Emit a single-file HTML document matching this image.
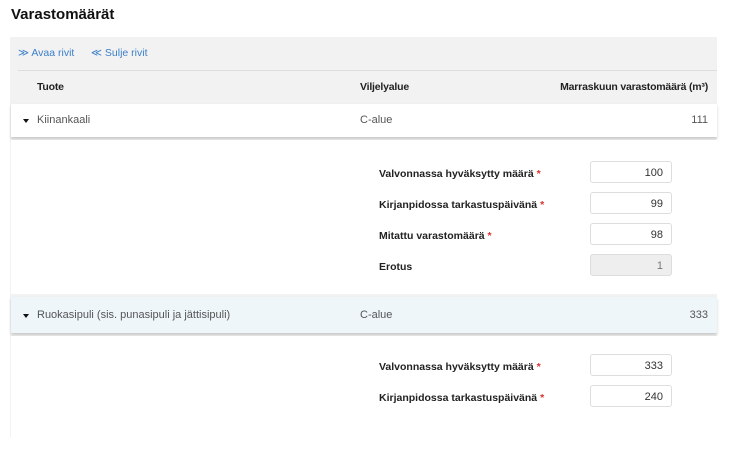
<!DOCTYPE html>
<html><head><meta charset="utf-8"><style>
body{margin:0;width:738px;height:417px;overflow:hidden;background:#fff;font-family:"Liberation Sans",sans-serif;font-size:11px;color:#333}
.t{position:absolute;left:11px;top:6px;font-size:15px;font-weight:bold;color:#111}
.p{position:absolute;left:10px;top:37px;width:707px;height:400px;background:#f2f2f2}
.a{position:absolute;white-space:nowrap}
.lnk{color:#3a7fc8;font-size:10.5px}
.row{position:absolute;left:1px;width:706px;box-shadow:0 2px 3px rgba(0,0,0,.18)}
.exp{position:absolute;left:1px;width:706px;background:#fff}
.lab{position:absolute;left:368px;font-weight:bold;color:#222;font-size:10.5px}
.lab i{color:#d33;font-style:normal}
.in{position:absolute;left:579px;width:82px;height:22px;border:1px solid #ddd;border-radius:3px;background:#fff;text-align:right;box-sizing:border-box;padding:5px 8px 0 0;font-size:11px;color:#333}
.tri{position:absolute;left:12px;width:0;height:0;border-left:3.5px solid transparent;border-right:3.5px solid transparent;border-top:4px solid #111}
.h{font-weight:bold;color:#222;font-size:10.5px;letter-spacing:-0.2px}
</style></head><body>
<div class="t">Varastomäärät</div>
<div class="p">
 <div class="a lnk" style="left:8px;top:10px">≫ Avaa rivit</div>
 <div class="a lnk" style="left:81px;top:10px">≪ Sulje rivit</div>
 <div class="a" style="left:8px;top:33px;width:699px;height:1px;background:#ddd"></div>
 <div class="a h" style="left:27px;top:44px">Tuote</div>
 <div class="a h" style="left:350px;top:44px">Viljelyalue</div>
 <div class="a h" style="right:9px;top:44px">Marraskuun varastomäärä (m³)</div>
 <div class="row" style="top:67px;height:33px;background:#fff">
  <div class="tri" style="top:15px"></div>
  <div class="a" style="left:26px;top:10px;color:#555">Kiinankaali</div>
  <div class="a" style="left:349px;top:10px;color:#555">C-alue</div>
  <div class="a" style="right:9px;top:10px;color:#555">111</div>
 </div>
 <div class="exp" style="top:103px;height:154px">
  <div class="lab" style="top:28px">Valvonnassa hyväksytty määrä <i>*</i></div><div class="in" style="top:21px">100</div>
  <div class="lab" style="top:59px">Kirjanpidossa tarkastuspäivänä <i>*</i></div><div class="in" style="top:52px">99</div>
  <div class="lab" style="top:90px">Mitattu varastomäärä <i>*</i></div><div class="in" style="top:83px">98</div>
  <div class="lab" style="top:121px">Erotus</div><div class="in" style="top:114px;background:#eee;color:#777">1</div>
 </div>
 <div class="row" style="top:260px;height:36px;background:#eef6fa">
  <div class="tri" style="top:17px"></div>
  <div class="a" style="left:26px;top:12px;color:#555">Ruokasipuli (sis. punasipuli ja jättisipuli)</div>
  <div class="a" style="left:349px;top:12px;color:#555">C-alue</div>
  <div class="a" style="right:9px;top:12px;color:#555">333</div>
 </div>
 <div class="exp" style="top:299px;height:120px">
  <div class="lab" style="top:25px">Valvonnassa hyväksytty määrä <i>*</i></div><div class="in" style="top:18px">333</div>
  <div class="lab" style="top:56px">Kirjanpidossa tarkastuspäivänä <i>*</i></div><div class="in" style="top:49px">240</div>
 </div>
</div>
</body></html>
